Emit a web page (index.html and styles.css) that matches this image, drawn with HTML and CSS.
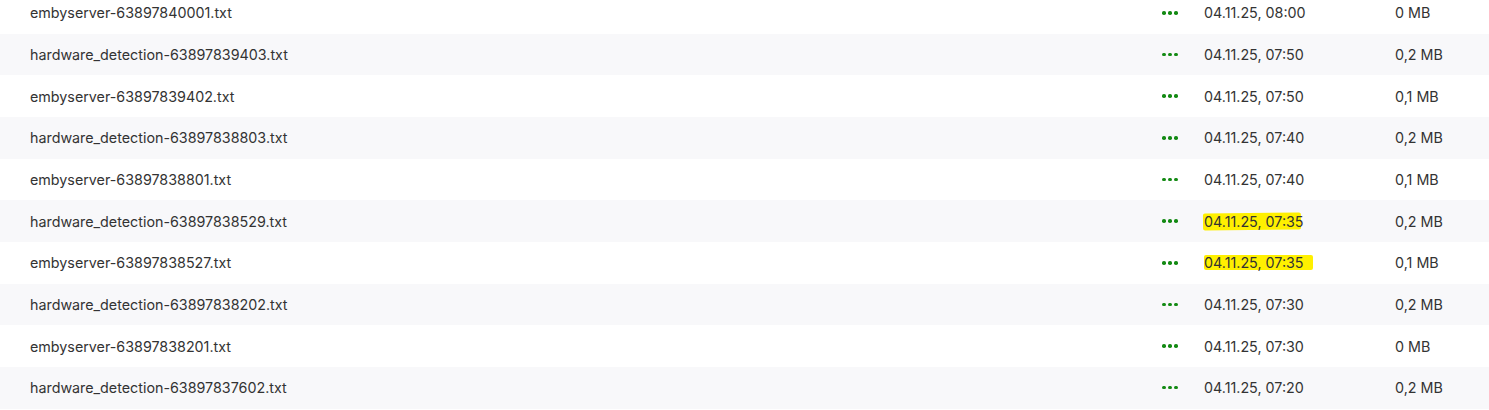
FILE: index.html
```html
<!DOCTYPE html>
<html lang="de">
<head>
  <meta charset="UTF-8" />
  <title>Logs</title>
  <link rel="stylesheet" href="styles.css">
</head>
<body>
  <div class="log-list">
    <div class="log-row">
      <div class="log-name">embyserver-63897840001.txt</div>
      <div class="log-menu"><span class="dots"><i></i><i></i><i></i></span></div>
      <div class="log-date">04.11.25, 08:00</div>
      <div class="log-size">0 MB</div>
    </div>
    <div class="log-row">
      <div class="log-name">hardware_detection-63897839403.txt</div>
      <div class="log-menu"><span class="dots"><i></i><i></i><i></i></span></div>
      <div class="log-date">04.11.25, 07:50</div>
      <div class="log-size">0,2 MB</div>
    </div>
    <div class="log-row">
      <div class="log-name">embyserver-63897839402.txt</div>
      <div class="log-menu"><span class="dots"><i></i><i></i><i></i></span></div>
      <div class="log-date">04.11.25, 07:50</div>
      <div class="log-size">0,1 MB</div>
    </div>
    <div class="log-row">
      <div class="log-name">hardware_detection-63897838803.txt</div>
      <div class="log-menu"><span class="dots"><i></i><i></i><i></i></span></div>
      <div class="log-date">04.11.25, 07:40</div>
      <div class="log-size">0,2 MB</div>
    </div>
    <div class="log-row">
      <div class="log-name">embyserver-63897838801.txt</div>
      <div class="log-menu"><span class="dots"><i></i><i></i><i></i></span></div>
      <div class="log-date">04.11.25, 07:40</div>
      <div class="log-size">0,1 MB</div>
    </div>
    <div class="log-row">
      <div class="log-name">hardware_detection-63897838529.txt</div>
      <div class="log-menu"><span class="dots"><i></i><i></i><i></i></span></div>
      <div class="log-date"><span class="mark mark-short">04.11.25, 07:35</span></div>
      <div class="log-size">0,2 MB</div>
    </div>
    <div class="log-row">
      <div class="log-name">embyserver-63897838527.txt</div>
      <div class="log-menu"><span class="dots"><i></i><i></i><i></i></span></div>
      <div class="log-date"><span class="mark mark-long">04.11.25, 07:35</span></div>
      <div class="log-size">0,1 MB</div>
    </div>
    <div class="log-row">
      <div class="log-name">hardware_detection-63897838202.txt</div>
      <div class="log-menu"><span class="dots"><i></i><i></i><i></i></span></div>
      <div class="log-date">04.11.25, 07:30</div>
      <div class="log-size">0,2 MB</div>
    </div>
    <div class="log-row">
      <div class="log-name">embyserver-63897838201.txt</div>
      <div class="log-menu"><span class="dots"><i></i><i></i><i></i></span></div>
      <div class="log-date">04.11.25, 07:30</div>
      <div class="log-size">0 MB</div>
    </div>
    <div class="log-row">
      <div class="log-name">hardware_detection-63897837602.txt</div>
      <div class="log-menu"><span class="dots"><i></i><i></i><i></i></span></div>
      <div class="log-date">04.11.25, 07:20</div>
      <div class="log-size">0,2 MB</div>
    </div>
  </div>
</body>
</html>
```

FILE: styles.css
```css
body {
  font-family: Inter, "Noto Sans", sans-serif;
  background: #fff;
  color: #333;
  margin: 0;
  overflow: hidden;
}

/* list is scrolled a little, first row is cut at the top */
.log-list {
  margin-top: -8px;
}

.log-row {
  display: grid;
  grid-template-columns: 1fr 42px 191px 94px;
  align-items: center;
  height: 41.67px;
  font-size: 14.3px;
}

.log-row:nth-child(even) {
  background: #f8f8fa;
}

.log-name {
  padding-left: 30px;
}

.log-menu {
  display: flex;
  align-items: center;
}

.dots {
  display: flex;
  gap: 2.5px;
}

.dots i {
  width: 3.5px;
  height: 3.5px;
  border-radius: 50%;
  background: #138a13;
}

.mark {
  position: relative;
  z-index: 0;
}

.mark::before {
  content: "";
  position: absolute;
  z-index: -1;
  background: #fff000;
  border-radius: 2px;
}

.mark-short::before {
  left: -1px;
  right: 3px;
  top: 0;
  bottom: 0;
  transform: rotate(-0.6deg);
}

.mark-long::before {
  left: 0;
  right: -9px;
  top: 1px;
  bottom: 1px;
}
```
